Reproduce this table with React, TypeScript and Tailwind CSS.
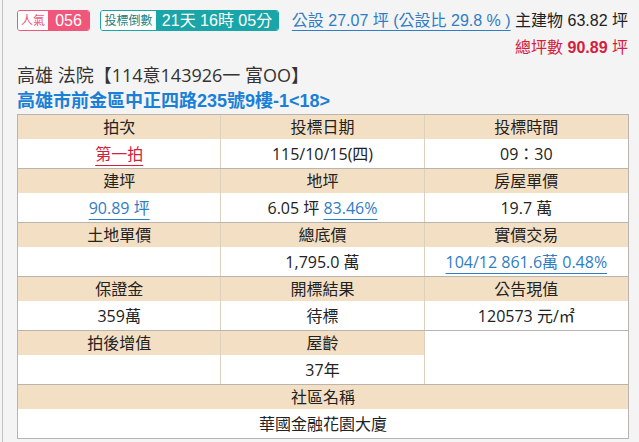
const sans = "font-['Liberation_Sans','Noto_Sans_CJK_TC',sans-serif]";
const open = "font-['Open_Sans','Noto_Sans_CJK_TC',sans-serif]";

type Cell = { label: string; value?: React.ReactNode };

function Group({ cells, last }: { cells: (Cell | null)[]; last?: boolean }) {
  return (
    <div className={`grid grid-cols-3 ${last ? '' : 'border-b border-[#b9b4ad]'}`}>
      {cells.map((c, i) => (
        <div key={i} className={`flex flex-col ${i < 2 ? 'border-r border-[#ddd0bf]' : ''}`}>
          {c ? (
            <>
              <div className="h-6 bg-[#f3dfc4] flex items-center justify-center text-[16px] text-[#222]">{c.label}</div>
              <div className="h-[29px] bg-white flex items-center justify-center text-[16px] text-[#222]">{c.value}</div>
            </>
          ) : (
            <div className="h-[53px] bg-white" />
          )}
        </div>
      ))}
    </div>
  );
}

const link = 'text-[#2f7dc4] underline underline-offset-[5px] decoration-[#2f7dc4]';

export default function App() {
  return (
    <div className="w-[639px] h-[442px] bg-[#f4f4f4] overflow-hidden">
      <div className="ml-[2px] h-full border-l border-[#c4c4c4] pl-[14px] pr-[11px] pt-[10px]">
        {/* top badges + area */}
        <div className="flex justify-between">
          <div className="flex gap-[10px] h-[21px]">
            <div className="flex rounded-[3px] overflow-hidden border border-[#f0567a]">
              <span className={`w-[30px] bg-white text-[#f0567a] text-[12px] flex items-center justify-center ${open}`}>人氣</span>
              <span className={`w-[41px] bg-[#f0567a] text-white text-[16px] flex items-center justify-center ${sans}`}>056</span>
            </div>
            <div className="flex rounded-[3px] overflow-hidden border border-[#1aa6a8]">
              <span className={`w-[55px] bg-white text-[#1d7f80] text-[12px] flex items-center justify-center ${open}`}>投標倒數</span>
              <span className={`w-[122px] bg-[#1aa6a8] text-white text-[16px] flex items-center justify-center ${sans}`}>21天 16時 05分</span>
            </div>
          </div>
          <div className={`text-right text-[16px] leading-[27px] ${sans}`}>
            <div className="-mt-[3px]">
              <span className="text-[#2f7dc4] underline underline-offset-[4px]">公設 27.07 坪 (公設比 29.8 % )</span>
              <span className="text-[#222]"> 主建物 63.82 坪</span>
            </div>
            <div className="text-[#d4203c]">
              總坪數 <b>90.89</b> 坪
            </div>
          </div>
        </div>

        <div className={`mt-[1px] text-[18px] leading-[27px] text-[#333] ${open}`}>高雄 法院【114意143926一 富OO】</div>
        <div className={`text-[18px] leading-[25px] font-bold text-[#1a7fd6] ${sans}`}>高雄市前金區中正四路235號9樓-1&lt;18&gt;</div>

        <div className={`w-[612px] border border-[#b9b4ad] ${open}`}>
          <Group
            cells={[
              { label: '拍次', value: <span className="text-[#d4203c] underline underline-offset-[5px]">第一拍</span> },
              { label: '投標日期', value: '115/10/15(四)' },
              { label: '投標時間', value: '09：30' },
            ]}
          />
          <Group
            cells={[
              { label: '建坪', value: <span className={link}>90.89 坪</span> },
              { label: '地坪', value: <span>6.05 坪 <span className={link}>83.46%</span></span> },
              { label: '房屋單價', value: '19.7 萬' },
            ]}
          />
          <Group
            cells={[
              { label: '土地單價', value: '' },
              { label: '總底價', value: '1,795.0 萬' },
              { label: '實價交易', value: <span className={link}>104/12 861.6萬 0.48%</span> },
            ]}
          />
          <Group
            cells={[
              { label: '保證金', value: '359萬' },
              { label: '開標結果', value: '待標' },
              { label: '公告現值', value: '120573 元/㎡' },
            ]}
          />
          <Group cells={[{ label: '拍後增值', value: '' }, { label: '屋齡', value: '37年' }, null]} />
          <div>
            <div className="h-6 bg-[#f3dfc4] flex items-center justify-center text-[16px] text-[#222]">社區名稱</div>
            <div className="h-[29px] bg-white flex items-center justify-center text-[16px] text-[#222]">華國金融花園大廈</div>
          </div>
        </div>
      </div>
    </div>
  );
}
